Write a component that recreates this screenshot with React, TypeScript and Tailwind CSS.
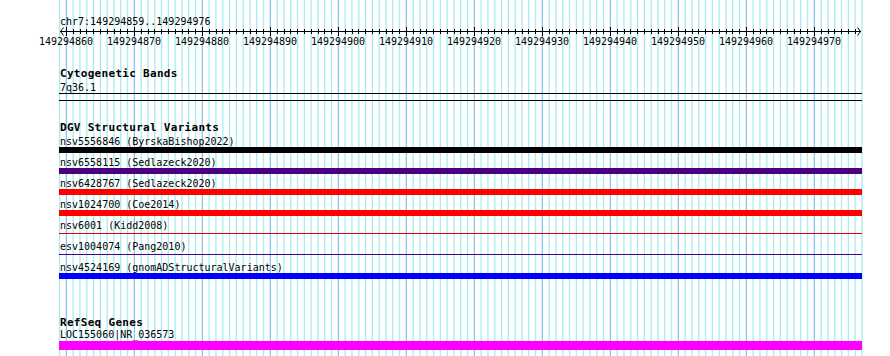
import React from "react";

const START = 59.5;
const STEP = 6.8;
const COUNT = 119;

const rulerLabels = [
  "149294860",
  "149294870",
  "149294880",
  "149294890",
  "149294900",
  "149294910",
  "149294920",
  "149294930",
  "149294940",
  "149294950",
  "149294960",
  "149294970",
];

type Row = { label: string; kind: "thick" | "thin"; cls: string };

const rows: Row[] = [
  { label: "nsv5556846 (ByrskaBishop2022)", kind: "thick", cls: "bg-[#000000]" },
  { label: "nsv6558115 (Sedlazeck2020)", kind: "thick", cls: "bg-[#4b0082]" },
  { label: "nsv6428767 (Sedlazeck2020)", kind: "thick", cls: "bg-[#ff0000]" },
  { label: "nsv1024700 (Coe2014)", kind: "thick", cls: "bg-[#ff0000]" },
  { label: "nsv6001 (Kidd2008)", kind: "thin", cls: "bg-[#e80000]" },
  { label: "esv1004074 (Pang2010)", kind: "thin", cls: "bg-[#4b0082]" },
  { label: "nsv4524169 (gnomADStructuralVariants)", kind: "thick", cls: "bg-[#0000ff]" },
];

function Grid() {
  const ks = Array.from({ length: COUNT }, (_, k) => k);
  return (
    <svg className="absolute inset-0" width={890} height={356}>
      {ks.map((k) => {
        const x = START + STEP * k;
        const major = (k - 1) % 10 === 0;
        return (
          <rect
            key={k}
            x={x - 0.6}
            y={0}
            width={1.3}
            height={356}
            fill={major ? "#88c6ea" : "#a8ecf0"}
          />
        );
      })}
      <rect x={60} y={31} width={801} height={1} fill="#000" />
      <path d="M63.5 27.5 L60.5 31.5 L63.5 35.5" stroke="#000" strokeWidth={1} fill="none" />
      <path d="M857.5 27.5 L860.5 31.5 L857.5 35.5" stroke="#000" strokeWidth={1} fill="none" />
      {ks.slice(1, COUNT - 1).map((k) => {
        const x = Math.round(START + STEP * k - 0.3);
        const major = (k - 1) % 10 === 0;
        return (
          <rect
            key={"t" + k}
            x={x}
            y={major ? 27 : 29}
            width={1}
            height={major ? 9 : 5}
            fill="#000"
          />
        );
      })}
    </svg>
  );
}

export default function App() {
  return (
    <div className="relative w-[890px] h-[356px] overflow-hidden bg-white text-black font-['DejaVu_Sans_Mono',monospace] text-[10px] leading-[11px]">
      <Grid />
      <div className="relative flex flex-col pt-[15px]">
        <div className="h-[12px] pt-[1px] pl-[60px]">chr7:149294859..149294976</div>
        <div className="mt-[8px] h-[12px] pt-[1px] flex pl-[32px]">
          {rulerLabels.map((l) => (
            <div key={l} className="w-[68px] text-center">
              {l}
            </div>
          ))}
        </div>

        <div className="mt-[20px] h-[12px] pt-[1px] pl-[60px] text-[11px] leading-[11px] font-bold tracking-[0.3px]">
          Cytogenetic Bands
        </div>
        <div className="mt-[2px] h-[12px] pt-[1px] pl-[60px]">7q36.1</div>
        <div className="ml-[59px] w-[803px] h-[8px] border-y border-black" />

        <div className="mt-[20px] h-[12px] pt-[1px] pl-[60px] text-[11px] leading-[11px] font-bold tracking-[0.3px]">
          DGV Structural Variants
        </div>
        <div className="mt-[2px] flex flex-col gap-[3px]">
          {rows.map((r) => (
            <div key={r.label} className="flex flex-col">
              <div className="h-[12px] pt-[1px] pl-[60px]">{r.label}</div>
              {r.kind === "thick" ? (
                <div className={"ml-[59px] w-[803px] h-[6px] " + r.cls} />
              ) : (
                <div className="h-[6px] pt-[2px]">
                  <div className={"ml-[59px] w-[803px] h-[1px] " + r.cls} />
                </div>
              )}
            </div>
          ))}
        </div>

        <div className="mt-[37px] h-[12px] pt-[1px] pl-[60px] text-[11px] leading-[11px] font-bold tracking-[0.3px]">
          RefSeq Genes
        </div>
        <div className="mt-[1px] h-[12px] pl-[60px] leading-[11px]">LOC155060|NR_036573</div>
        <div className="ml-[59px] w-[803px] h-[9px] bg-[#ff00ff]" />
      </div>
    </div>
  );
}
